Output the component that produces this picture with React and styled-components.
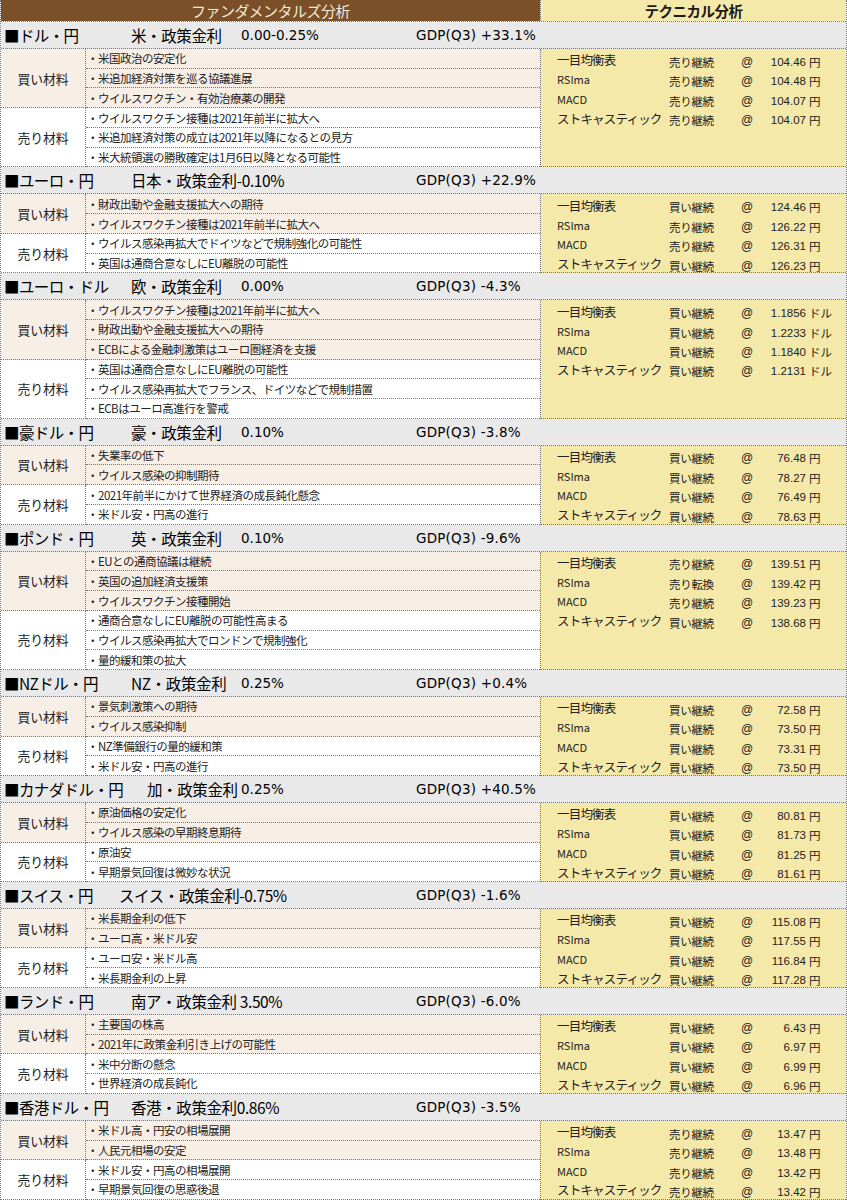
import React from "react";
import styled, { createGlobalStyle } from "styled-components";

const ROW = 19.74;
const HEAD = 27;

const GlobalStyle = createGlobalStyle`
  html, body {
    margin: 0;
    padding: 0;
    background: #ffffff;
  }
  body {
    font-family: "Noto Sans CJK JP", "Noto Sans", "Liberation Sans", sans-serif;
    color: #111;
  }
  * { box-sizing: border-box; }
`;

const data = [
  {
    pair: "ドル・円", policy: "米・政策金利", rate: "0.00-0.25%", gdp: "+33.1%", pad: 130,
    buy: ["米国政治の安定化", "米追加経済対策を巡る協議進展", "ウイルスワクチン・有効治療薬の開発"],
    sell: ["ウイルスワクチン接種は2021年前半に拡大へ", "米追加経済対策の成立は2021年以降になるとの見方", "米大統領選の勝敗確定は1月6日以降となる可能性"],
    unit: "円",
    tech: [["売り継続", "104.46"], ["売り継続", "104.48"], ["売り継続", "104.07"], ["売り継続", "104.07"]],
  },
  {
    pair: "ユーロ・円", policy: "日本・政策金利-0.10%", gdp: "+22.9%", pad: 130,
    buy: ["財政出動や金融支援拡大への期待", "ウイルスワクチン接種は2021年前半に拡大へ"],
    sell: ["ウイルス感染再拡大でドイツなどで規制強化の可能性", "英国は通商合意なしにEU離脱の可能性"],
    unit: "円",
    tech: [["買い継続", "124.46"], ["売り継続", "126.22"], ["売り継続", "126.31"], ["買い継続", "126.23"]],
  },
  {
    pair: "ユーロ・ドル", policy: "欧・政策金利", rate: "0.00%", gdp: "-4.3%", pad: 130,
    buy: ["ウイルスワクチン接種は2021年前半に拡大へ", "財政出動や金融支援拡大への期待", "ECBによる金融刺激策はユーロ圏経済を支援"],
    sell: ["英国は通商合意なしにEU離脱の可能性", "ウイルス感染再拡大でフランス、ドイツなどで規制措置", "ECBはユーロ高進行を警戒"],
    unit: "ドル",
    tech: [["買い継続", "1.1856"], ["買い継続", "1.2233"], ["買い継続", "1.1840"], ["買い継続", "1.2131"]],
  },
  {
    pair: "豪ドル・円", policy: "豪・政策金利", rate: "0.10%", gdp: "-3.8%", pad: 130,
    buy: ["失業率の低下", "ウイルス感染の抑制期待"],
    sell: ["2021年前半にかけて世界経済の成長鈍化懸念", "米ドル安・円高の進行"],
    unit: "円",
    tech: [["買い継続", "76.48"], ["買い継続", "78.27"], ["買い継続", "76.49"], ["買い継続", "78.63"]],
  },
  {
    pair: "ポンド・円", policy: "英・政策金利", rate: "0.10%", gdp: "-9.6%", pad: 130,
    buy: ["EUとの通商協議は継続", "英国の追加経済支援策", "ウイルスワクチン接種開始"],
    sell: ["通商合意なしにEU離脱の可能性高まる", "ウイルス感染再拡大でロンドンで規制強化", "量的緩和策の拡大"],
    unit: "円",
    tech: [["売り継続", "139.51"], ["売り転換", "139.42"], ["売り継続", "139.23"], ["買い継続", "138.68"]],
  },
  {
    pair: "NZドル・円", policy: "NZ・政策金利", rate: "0.25%", gdp: "+0.4%", pad: 130,
    buy: ["景気刺激策への期待", "ウイルス感染抑制"],
    sell: ["NZ準備銀行の量的緩和策", "米ドル安・円高の進行"],
    unit: "円",
    tech: [["買い継続", "72.58"], ["買い継続", "73.50"], ["買い継続", "73.31"], ["買い継続", "73.50"]],
  },
  {
    pair: "カナダドル・円", policy: "加・政策金利", rate: "0.25%", gdp: "+40.5%", pad: 146,
    buy: ["原油価格の安定化", "ウイルス感染の早期終息期待"],
    sell: ["原油安", "早期景気回復は微妙な状況"],
    unit: "円",
    tech: [["買い継続", "80.81"], ["買い継続", "81.73"], ["買い継続", "81.25"], ["買い継続", "81.61"]],
  },
  {
    pair: "スイス・円", policy: "スイス・政策金利-0.75%", gdp: "-1.6%", pad: 118,
    buy: ["米長期金利の低下", "ユーロ高・米ドル安"],
    sell: ["ユーロ安・米ドル高", "米長期金利の上昇"],
    unit: "円",
    tech: [["買い継続", "115.08"], ["買い継続", "117.55"], ["買い継続", "116.84"], ["買い継続", "117.28"]],
  },
  {
    pair: "ランド・円", policy: "南ア・政策金利 3.50%", gdp: "-6.0%", pad: 130,
    buy: ["主要国の株高", "2021年に政策金利引き上げの可能性"],
    sell: ["米中分断の懸念", "世界経済の成長鈍化"],
    unit: "円",
    tech: [["買い継続", "6.43"], ["買い継続", "6.97"], ["買い継続", "6.99"], ["買い継続", "6.96"]],
  },
  {
    pair: "香港ドル・円", policy: "香港・政策金利0.86%", gdp: "-3.5%", pad: 130,
    buy: ["米ドル高・円安の相場展開", "人民元相場の安定"],
    sell: ["米ドル安・円高の相場展開", "早期景気回復の思惑後退"],
    unit: "円",
    tech: [["売り継続", "13.47"], ["売り継続", "13.48"], ["売り継続", "13.42"], ["売り継続", "13.42"]],
  },
];

const indicators = ["一目均衡表", "RSIma", "MACD", "ストキャスティック"];

const Sheet = styled.div`
  width: 847px;
  border-left: 1px dotted #777;
  border-right: 1px dotted #777;
`;

const TitleBar = styled.div`
  display: grid;
  grid-template-columns: 539px 1fr;
  height: 22px;
  border-bottom: 1px dotted #777;
`;

const TitleCell = styled.div`
  display: flex;
  align-items: center;
  justify-content: center;
  font-size: ${(p) => (p.$tech ? "14.5px" : "15px")};
  background: ${(p) => (p.$tech ? "#f5e9a9" : "#7b5028")};
  color: ${(p) => (p.$tech ? "#1a1a1a" : "#f3ead8")};
  font-weight: ${(p) => (p.$tech ? 700 : 400)};
  border-left: ${(p) => (p.$tech ? "1px dotted #777" : "none")};
  letter-spacing: -0.5px;
`;

const Header = styled.div`
  display: flex;
  align-items: center;
  height: ${HEAD}px;
  background: #e9e9e9;
  border-bottom: 1px dotted #777;
  font-size: 15.5px;
  white-space: nowrap;
  color: #000;
`;

const Pair = styled.div`
  width: ${(p) => p.$pad}px;
  padding-left: 3px;
  flex-shrink: 0;
  letter-spacing: -0.6px;
`;

const Policy = styled.div`
  width: ${(p) => (p.$split ? 240 - p.$pad : 415 - p.$pad)}px;
  flex-shrink: 0;
  letter-spacing: -0.4px;
`;

const Rate = styled.div`
  width: 175px;
  flex-shrink: 0;
  font-family: "DejaVu Sans", "Liberation Sans", sans-serif;
  font-size: 13.5px;
`;

const Gdp = styled.div`
  font-family: "DejaVu Sans", "Liberation Sans", sans-serif;
  font-size: 13.5px;
  letter-spacing: 0.2px;
`;

const Body = styled.div`
  display: grid;
  grid-template-columns: 539px 1fr;
`;

const Side = styled.div`
  display: flex;
  flex-direction: column;
`;

const Group = styled.div`
  display: grid;
  grid-template-columns: 85px 1fr;
  background: ${(p) => (p.$buy ? "#f7eee6" : "#ffffff")};
`;

const GroupLabel = styled.div`
  display: flex;
  align-items: center;
  justify-content: center;
  font-size: 12.8px;
  border-right: 1px dotted #777;
  border-bottom: 1px dotted #777;
  color: #222;
`;

const Items = styled.div`
  display: flex;
  flex-direction: column;
`;

const Item = styled.div`
  height: ${ROW}px;
  display: flex;
  align-items: center;
  padding-left: 1px;
  font-size: 11.5px;
  letter-spacing: -0.5px;
  border-bottom: 1px dotted #777;
  white-space: nowrap;
  color: #222;
`;

const Tech = styled.div`
  background: #f5e9a9;
  border-left: 1px dotted #777;
  border-bottom: 1px dotted #777;
  padding-left: 16px;
  display: flex;
  flex-direction: column;
`;

const TechRow = styled.div`
  height: ${ROW - 0.26}px;
  flex-shrink: 0;
  display: grid;
  grid-template-columns: 112px 72px 26px 39px auto;
  align-items: center;
  font-size: 11.5px;
  color: #222;
  white-space: nowrap;
`;

const Indicator = styled.span`
  font-size: ${(p) => (p.$latin ? "11px" : "12.5px")};
  letter-spacing: ${(p) => (p.$latin ? "0" : "-0.8px")};
  transform: translateY(0.5px);
`;

const Signal = styled.span`
  font-size: 11.5px;
  transform: translateY(2.5px);
  letter-spacing: -0.3px;
`;

const Num = styled.span`
  text-align: right;
  font-family: "Liberation Sans", sans-serif;
  font-size: 11.5px;
  transform: translateY(2.5px);
`;

const Unit = styled.span`
  padding-left: 3px;
  font-size: 11.5px;
  transform: translateY(2.5px);
`;

const At = styled.span`
  font-family: "Liberation Sans", sans-serif;
  font-size: 12px;
  transform: translateY(2.5px);
`;

const Section = ({ s }) => {
  const split = Boolean(s.rate);
  return (
    <>
      <Header>
        <Pair $pad={s.pad}>■{s.pair}</Pair>
        <Policy $pad={s.pad} $split={split}>{s.policy}</Policy>
        {split && <Rate>{s.rate}</Rate>}
        <Gdp>GDP(Q3) {s.gdp}</Gdp>
      </Header>
      <Body>
        <Side>
          <Group $buy>
            <GroupLabel>買い材料</GroupLabel>
            <Items>
              {s.buy.map((t) => (
                <Item key={t}>・{t}</Item>
              ))}
            </Items>
          </Group>
          <Group>
            <GroupLabel>売り材料</GroupLabel>
            <Items>
              {s.sell.map((t) => (
                <Item key={t}>・{t}</Item>
              ))}
            </Items>
          </Group>
        </Side>
        <Tech>
          {s.tech.map(([sig, val], i) => (
            <TechRow key={i}>
              <Indicator $latin={i === 1 || i === 2}>{indicators[i]}</Indicator>
              <Signal>{sig}</Signal>
              <At>@</At>
              <Num>{val}</Num>
              <Unit>{s.unit}</Unit>
            </TechRow>
          ))}
        </Tech>
      </Body>
    </>
  );
};

export default function App() {
  return (
    <>
      <GlobalStyle />
      <Sheet>
        <TitleBar>
          <TitleCell>ファンダメンタルズ分析</TitleCell>
          <TitleCell $tech>テクニカル分析</TitleCell>
        </TitleBar>
        {data.map((s) => (
          <Section key={s.pair} s={s} />
        ))}
      </Sheet>
    </>
  );
}
